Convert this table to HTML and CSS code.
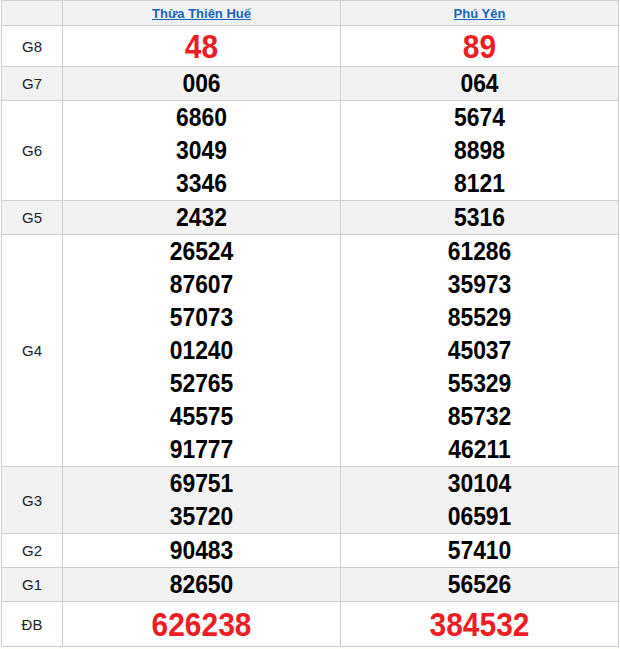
FILE: index.html
```html
<!DOCTYPE html>
<html lang="vi">
<head>
<meta charset="utf-8">
<title>KQXS</title>
<link rel="stylesheet" href="styles.css">
</head>
<body>
<div class="wrap">
<table class="kq">
  <thead>
    <tr>
      <th class="lbl"></th>
      <th><a href="#">Thừa Thiên Huế</a></th>
      <th><a href="#">Phú Yên</a></th>
    </tr>
  </thead>
  <tbody>
    <tr class="g8">
      <td class="lbl">G8</td>
      <td><div class="n red">48</div></td>
      <td><div class="n red">89</div></td>
    </tr>
    <tr class="alt">
      <td class="lbl">G7</td>
      <td><div class="n">006</div></td>
      <td><div class="n">064</div></td>
    </tr>
    <tr>
      <td class="lbl">G6</td>
      <td><div class="n">6860</div><div class="n">3049</div><div class="n">3346</div></td>
      <td><div class="n">5674</div><div class="n">8898</div><div class="n">8121</div></td>
    </tr>
    <tr class="alt">
      <td class="lbl">G5</td>
      <td><div class="n">2432</div></td>
      <td><div class="n">5316</div></td>
    </tr>
    <tr>
      <td class="lbl">G4</td>
      <td><div class="n">26524</div><div class="n">87607</div><div class="n">57073</div><div class="n">01240</div><div class="n">52765</div><div class="n">45575</div><div class="n">91777</div></td>
      <td><div class="n">61286</div><div class="n">35973</div><div class="n">85529</div><div class="n">45037</div><div class="n">55329</div><div class="n">85732</div><div class="n">46211</div></td>
    </tr>
    <tr class="alt">
      <td class="lbl">G3</td>
      <td><div class="n">69751</div><div class="n">35720</div></td>
      <td><div class="n">30104</div><div class="n">06591</div></td>
    </tr>
    <tr>
      <td class="lbl">G2</td>
      <td><div class="n">90483</div></td>
      <td><div class="n">57410</div></td>
    </tr>
    <tr class="alt">
      <td class="lbl">G1</td>
      <td><div class="n">82650</div></td>
      <td><div class="n">56526</div></td>
    </tr>
    <tr class="db">
      <td class="lbl">ĐB</td>
      <td><div class="n red">626238</div></td>
      <td><div class="n red">384532</div></td>
    </tr>
  </tbody>
</table>
</div>
</body>
</html>
```

FILE: styles.css
```css
html, body {
  margin: 0;
  padding: 0;
  background: #fffdf6;
}
.wrap {
  padding: 0 1px 0 1px;
  background: #fffdf6;
}
.kq {
  width: 618px;
  border-collapse: collapse;
  font-family: "Liberation Sans", Arial, sans-serif;
  background: #fff;
  color: #000;
}
.kq th, .kq td {
  border: 1px solid #cfcfcf;
  padding: 0;
  text-align: center;
  vertical-align: middle;
}
.kq th {
  height: 24px;
  background: #f2f2f2;
  font-size: 13px;
  font-weight: bold;
}
.kq th a {
  color: #1565c0;
  text-decoration: underline;
}
.kq .lbl {
  width: 60px;
  font-size: 15px;
  color: #222;
  font-weight: normal;
}
.kq tr.alt td {
  background: #f2f2f2;
}
.n {
  font-size: 26px;
  font-weight: bold;
  line-height: 33px;
  transform: scaleX(0.88);
}
.n.red {
  color: #ee1c25;
  font-size: 34px;
}
.g8 .n {
  line-height: 40px;
}
.db .n {
  line-height: 44px;
}
```
